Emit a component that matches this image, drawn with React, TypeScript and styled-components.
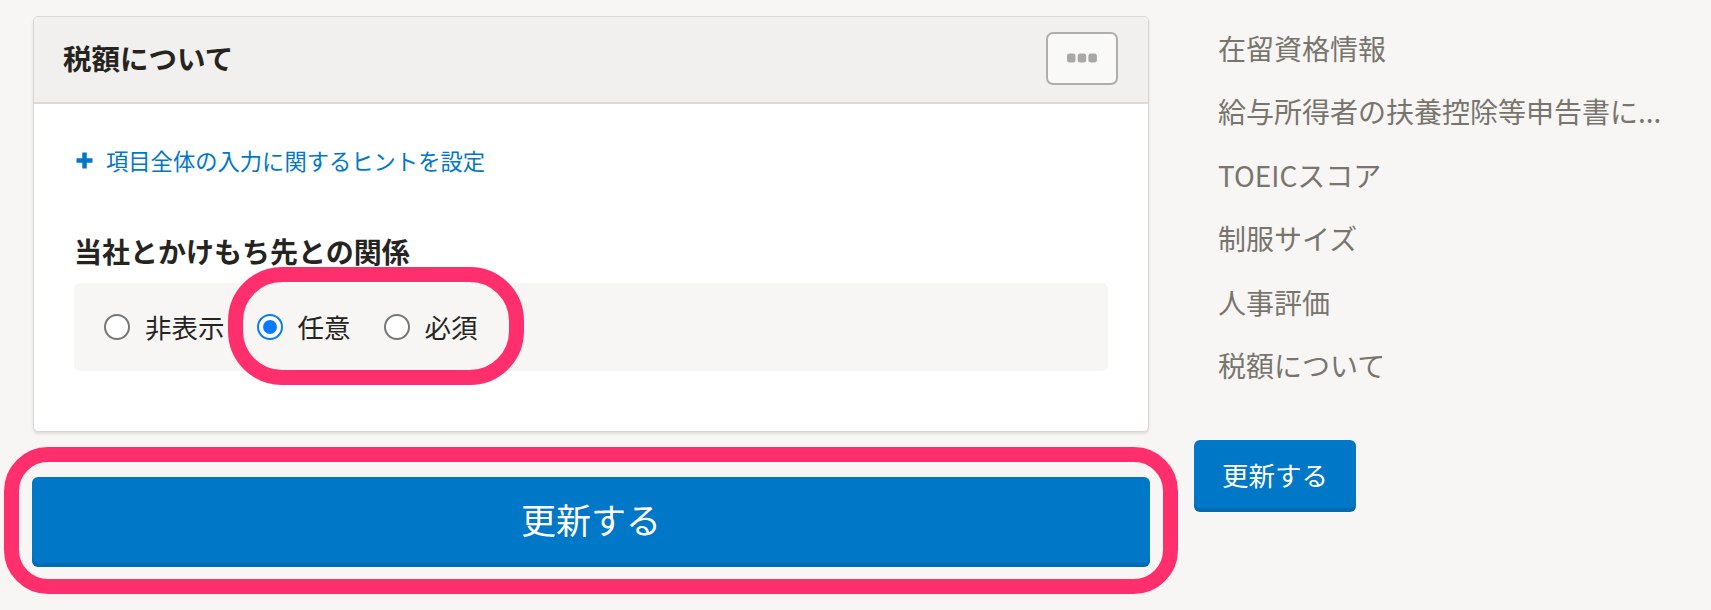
import React, { useState } from "react";
import styled, { createGlobalStyle } from "styled-components";

const GlobalStyle = createGlobalStyle`
	html, body {
		margin: 0;
		padding: 0;
		background: #f7f6f4;
	}
	body {
		font-family: "Noto Sans CJK JP", "Noto Sans", sans-serif;
		color: #26241f;
	}
`;

const Page = styled.div`
	display: flex;
	align-items: flex-start;
	gap: 45px;
	padding: 16px 0 0 33px;
	min-height: 594px;
`;

const MainColumn = styled.div`
	width: 1116px;
	display: flex;
	flex-direction: column;
	gap: 45px;
`;

const Card = styled.section`
	background: #fff;
	border: 1px solid #d8d7d4;
	border-radius: 5px;
	box-shadow: 0 2px 3px rgba(0, 0, 0, 0.1);
	overflow: hidden;
`;

const CardHeader = styled.header`
	height: 87px;
	box-sizing: border-box;
	display: flex;
	align-items: center;
	justify-content: space-between;
	padding: 0 30px 3px 29px;
	background: #f1f0ee;
	border-bottom: 2px solid #dcdbd8;
`;

const CardTitle = styled.h2`
	margin: 0;
	font-size: 28.5px;
	line-height: 36px;
	font-weight: 700;
	color: #26241f;
`;

const MoreButton = styled.button`
	width: 72px;
	height: 53px;
	display: flex;
	align-items: center;
	justify-content: center;
	background: #f9f9f8;
	border: 2px solid #afaeac;
	border-radius: 7px;
	padding: 0;
	cursor: pointer;
`;

const CardBody = styled.div`
	padding: 40px 40px 60px;
	display: flex;
	flex-direction: column;
`;

const HintLink = styled.a`
	display: flex;
	align-items: center;
	gap: 13px;
	padding-left: 2px;
	font-size: 22.3px;
	line-height: 32px;
	color: #0077c7;
	text-decoration: none;
	cursor: pointer;
`;

const FieldLabel = styled.h3`
	margin: 57px 0 14px;
	font-size: 28px;
	line-height: 36px;
	font-weight: 700;
	color: #26241f;
`;

const RadioGroup = styled.div`
	height: 88px;
	display: flex;
	align-items: center;
	gap: 32px;
	padding-left: 30px;
	background: #f7f6f4;
	border-radius: 6px;
`;

const Highlight = styled.div`
	position: relative;
	display: flex;
	align-items: center;
	gap: 33px;

	&::before {
		content: "";
		position: absolute;
		left: -29px;
		right: -46px;
		top: -42px;
		bottom: -40px;
		border: 15px solid #ff2f6e;
		border-radius: 54px;
		pointer-events: none;
	}
`;

const RadioOption = styled.label`
	display: flex;
	align-items: center;
	gap: 15px;
	font-size: 26.5px;
	line-height: 36px;
	color: #26241f;
	cursor: pointer;
`;

const RadioCircle = styled.span<{ $checked: boolean }>`
	width: 26px;
	height: 26px;
	box-sizing: border-box;
	border-radius: 50%;
	background: #fff;
	border: 2px solid ${(p) => (p.$checked ? "#0a7aff" : "#777")};
	display: flex;
	align-items: center;
	justify-content: center;

	&::after {
		content: "";
		width: 14px;
		height: 14px;
		border-radius: 50%;
		background: ${(p) => (p.$checked ? "#0a7aff" : "transparent")};
	}
`;

const WideButtonFrame = styled.div`
	position: relative;

	&::before {
		content: "";
		position: absolute;
		left: -29px;
		right: -29px;
		top: -30px;
		bottom: -27px;
		border: 15px solid #ff2f6e;
		border-radius: 44px;
		pointer-events: none;
	}
`;

const SubmitButton = styled.button<{ $wide?: boolean }>`
	display: flex;
	align-items: center;
	justify-content: center;
	border: none;
	color: #fff;
	background: #0077c7;
	cursor: pointer;
	font-family: "Noto Sans CJK JP", "Noto Sans", sans-serif;
	border-radius: 6px;
	box-shadow: inset 0 -4px 0 rgba(0, 0, 0, 0.1);
	padding: 0 0 ${(p) => (p.$wide ? "7px" : "3px")};
	width: ${(p) => (p.$wide ? "1118px" : "162px")};
	height: ${(p) => (p.$wide ? "90px" : "72px")};
	margin-left: ${(p) => (p.$wide ? "-1px" : "0")};
	font-size: ${(p) => (p.$wide ? "35px" : "26.5px")};
`;

const Sidebar = styled.nav`
	display: flex;
	flex-direction: column;
	width: 380px;
`;

const SideItem = styled.div`
	height: 63.5px;
	display: flex;
	align-items: center;
	padding-left: 24px;
	font-size: 28px;
	color: #77756e;
	white-space: nowrap;
`;

const SideButtonRow = styled.div`
	margin-top: 43px;
`;

const DotsIcon = () => (
	<svg width="30" height="10" viewBox="0 0 30 10">
		<rect x="0" y="0.5" width="8.5" height="9" rx="2.5" fill="#a9a8a6" />
		<rect x="10.7" y="0.5" width="8.5" height="9" rx="2.5" fill="#a9a8a6" />
		<rect x="21.4" y="0.5" width="8.5" height="9" rx="2.5" fill="#a9a8a6" />
	</svg>
);

const PlusIcon = () => (
	<svg width="17" height="17" viewBox="0 0 17 17">
		<path d="M8.5 0.5v16M0.5 8.5h16" stroke="#0077c7" strokeWidth="4.5" />
	</svg>
);

const options = ["非表示", "任意", "必須"];

const sideItems = [
	"在留資格情報",
	"給与所得者の扶養控除等申告書に...",
	"TOEICスコア",
	"制服サイズ",
	"人事評価",
	"税額について",
];

const App = () => {
	const [value, setValue] = useState("任意");

	const renderOption = (opt: string) => (
		<RadioOption key={opt} onClick={() => setValue(opt)}>
			<RadioCircle $checked={value === opt} />
			{opt}
		</RadioOption>
	);

	return (
		<>
			<GlobalStyle />
			<Page>
				<MainColumn>
					<Card>
						<CardHeader>
							<CardTitle>税額について</CardTitle>
							<MoreButton aria-label="more">
								<DotsIcon />
							</MoreButton>
						</CardHeader>
						<CardBody>
							<HintLink>
								<PlusIcon />
								項目全体の入力に関するヒントを設定
							</HintLink>
							<FieldLabel>当社とかけもち先との関係</FieldLabel>
							<RadioGroup>
								{renderOption(options[0])}
								<Highlight>{options.slice(1).map(renderOption)}</Highlight>
							</RadioGroup>
						</CardBody>
					</Card>
					<WideButtonFrame>
						<SubmitButton $wide>更新する</SubmitButton>
					</WideButtonFrame>
				</MainColumn>
				<Sidebar>
					{sideItems.map((item) => (
						<SideItem key={item}>{item}</SideItem>
					))}
					<SideButtonRow>
						<SubmitButton>更新する</SubmitButton>
					</SideButtonRow>
				</Sidebar>
			</Page>
		</>
	);
};

export default App;
